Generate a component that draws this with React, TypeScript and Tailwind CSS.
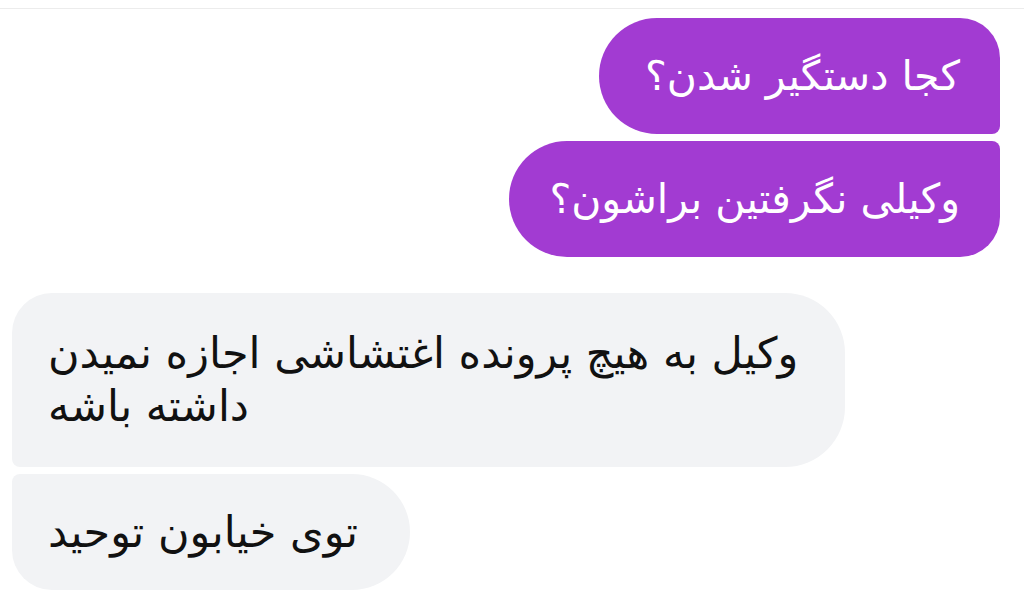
export default function App() {
  return (
    <div className="w-[1024px] h-[597px] overflow-hidden bg-white font-['DejaVu_Sans',sans-serif]">
      <div className="h-[9px] border-b border-[#ececec]" />
      <div className="flex flex-col pt-[9px] pl-[12px] pr-[24px]">
        <div dir="rtl" className="flex flex-col items-start gap-[7px]">
          <div className="bg-[#a23bd2] text-white text-[41px] leading-[52px] pl-[46px] pr-[40px] py-[32px] rounded-l-[58px] rounded-tr-[40px] rounded-br-[8px]">
            کجا دستگیر شدن؟
          </div>
          <div className="bg-[#a23bd2] text-white text-[41px] leading-[52px] px-[40px] py-[32px] rounded-l-[58px] rounded-tr-[8px] rounded-br-[40px]">
            وکیلی نگرفتین براشون؟
          </div>
        </div>
        <div dir="rtl" className="flex flex-col items-end gap-[7px] mt-[36px]">
          <div className="w-[833px] bg-[#f2f3f5] text-[#111] text-[43px] leading-[53px] text-left pl-[36px] pr-[40px] py-[34px] rounded-r-[60px] rounded-tl-[40px] rounded-bl-[8px]">
            وکیل به هیچ پرونده اغتشاشی اجازه نمیدن
            <br />
            داشته باشه
          </div>
          <div className="bg-[#f2f3f5] text-[#111] text-[43px] leading-[52px] pl-[36px] pr-[52px] py-[32px] rounded-r-[58px] rounded-tl-[8px] rounded-bl-[40px]">
            توی خیابون توحید
          </div>
        </div>
      </div>
    </div>
  );
}
